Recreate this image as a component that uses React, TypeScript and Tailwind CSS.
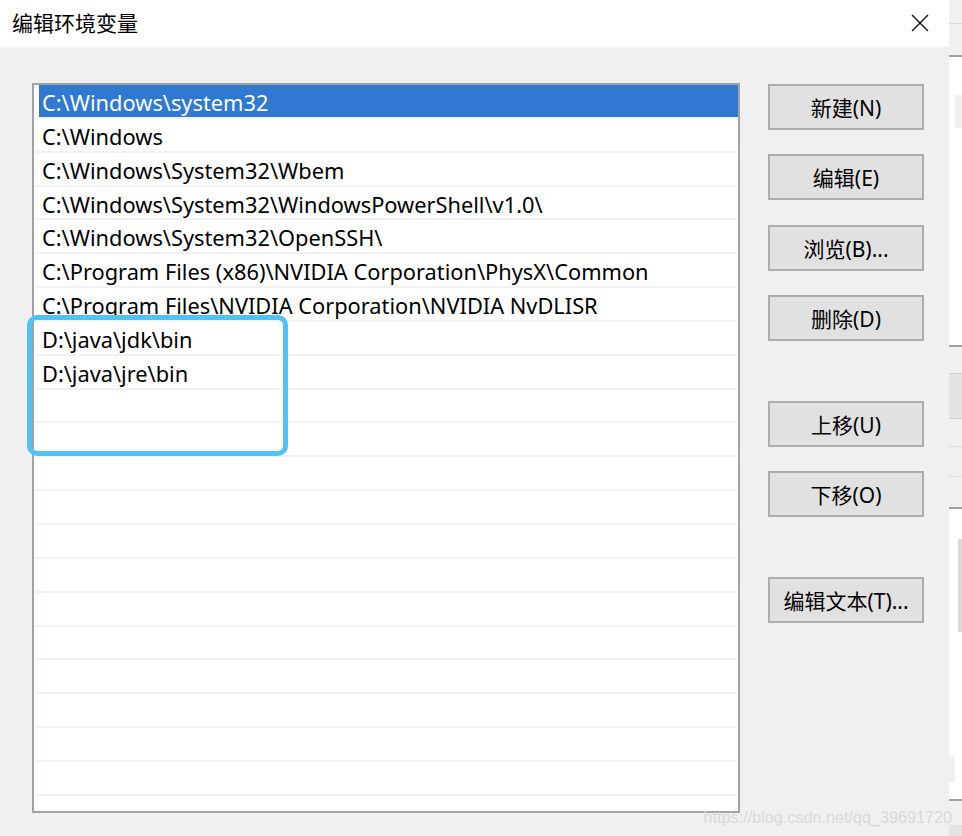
import React from "react";

const paths = [
  "C:\\Windows\\system32",
  "C:\\Windows",
  "C:\\Windows\\System32\\Wbem",
  "C:\\Windows\\System32\\WindowsPowerShell\\v1.0\\",
  "C:\\Windows\\System32\\OpenSSH\\",
  "C:\\Program Files (x86)\\NVIDIA Corporation\\PhysX\\Common",
  "C:\\Program Files\\NVIDIA Corporation\\NVIDIA NvDLISR",
  "D:\\java\\jdk\\bin",
  "D:\\java\\jre\\bin",
];

const rows = [...paths, ...Array(13).fill("")];

const font = "font-['Noto_Sans','Noto_Sans_CJK_SC',sans-serif]";

function DialogButton({ label, className = "" }: { label: string; className?: string }) {
  return (
    <button
      className={`flex h-[46px] w-[156px] items-center justify-center border-2 border-[#adadad] bg-[#e1e1e1] pt-[3px] text-[21px] leading-none text-black ${className}`}
    >
      {label}
    </button>
  );
}

// strip of the window behind the dialog, visible at the right edge
function BehindStrip() {
  return (
    <div className="flex h-full w-[13px] flex-col bg-[#f0f0f0]">
      <div className="h-[24px] border-b border-[#dcdcdc]" />
      <div className="h-[33px] border-b-2 border-[#a0a0a0]" />
      <div className="flex h-[288px] flex-col bg-white pl-[6px] pt-[38px]">
        <div className="h-[33px] w-[7px] bg-[#f0f0f0]" />
      </div>
      <div className="h-[28px] border-t-2 border-[#a0a0a0]" />
      <div className="h-[46px] border-y border-[#cfcfcf] bg-[#e3e3e3]" />
      <div className="h-[28px] border-b border-[#dcdcdc]" />
      <div className="h-[30px] border-b border-[#dcdcdc]" />
      <div className="h-[32px] border-b-2 border-[#a0a0a0]" />
      <div className="flex h-[290px] bg-white">
        <div className="flex w-[6px] flex-col pt-[248px]">
          <div className="h-[25px] bg-[#efefef]" />
        </div>
        <div className="ml-auto flex w-[4px] flex-col pt-[30px]">
          <div className="h-[93px] bg-[#dadada]" />
        </div>
      </div>
      <div className="h-[26px] border-t-2 border-[#a0a0a0]" />
      <div className="flex-1 bg-[#e3e3e3]" />
    </div>
  );
}

export default function App() {
  return (
    <div className={`relative flex h-[836px] w-[962px] overflow-hidden bg-[#f0f0f0] ${font}`}>
      <div className="flex h-full w-[949px] flex-col">
        <div className="flex h-[47px] items-center justify-between bg-white pl-[12px] pr-[20px]">
          <span className="text-[21px] leading-none text-black">编辑环境变量</span>
          <svg width="18" height="18" viewBox="0 0 18 18" className="mb-[2px]">
            <path d="M1 1L17 17M17 1L1 17" stroke="#111" strokeWidth="1.4" fill="none" />
          </svg>
        </div>
        <div className="flex flex-1 pl-[32px] pt-[36px]">
          <div className="h-[730px] w-[708px] overflow-hidden border-2 border-[#9ea2a9] bg-white">
            {rows.map((p, i) => (
              <div key={i} className="flex h-[33.85px] flex-col">
                <div
                  className={`ml-[5px] flex flex-1 items-center pl-[3px] pt-[4px] text-[21.8px] leading-none ${
                    i === 0 ? "bg-[#3078d0] text-white" : "text-black"
                  }`}
                >
                  {p}
                </div>
                <div className="ml-[1px] mr-[1px] h-[2px] bg-[#f2f2f2]" />
              </div>
            ))}
          </div>
          <div className="ml-[28px] flex flex-col pt-[1px]">
            <DialogButton label="新建(N)" />
            <DialogButton label="编辑(E)" className="mt-[24px]" />
            <DialogButton label="浏览(B)..." className="mt-[25px]" />
            <DialogButton label="删除(D)" className="mt-[24px]" />
            <DialogButton label="上移(U)" className="mt-[60px]" />
            <DialogButton label="下移(O)" className="mt-[24px]" />
            <DialogButton label="编辑文本(T)..." className="mt-[60px]" />
          </div>
        </div>
      </div>
      <BehindStrip />

      {/* annotation drawn over the list */}
      <div className="absolute left-[27px] top-[315px] h-[141px] w-[261px] rounded-[10px] border-[5px] border-[#50c2f6]" />

      <span className="absolute right-[10px] top-[805px] font-['Liberation_Sans',sans-serif] text-[16.2px] text-[#d9d9d9]">
        https://blog.csdn.net/qq_39691720
      </span>
    </div>
  );
}
